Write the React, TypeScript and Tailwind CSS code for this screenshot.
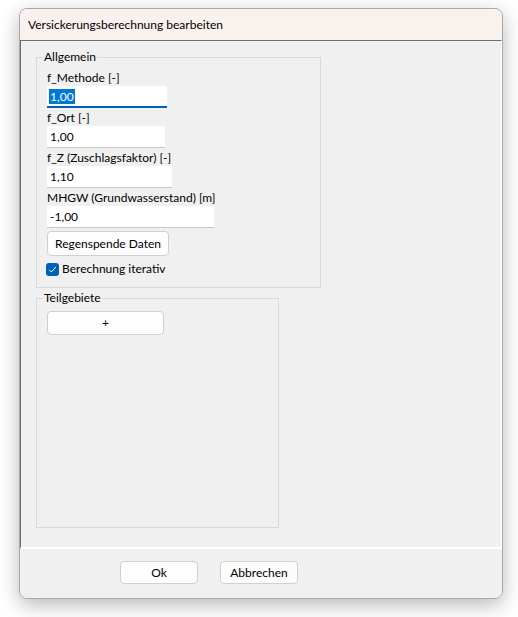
import { useState } from "react";

const font = { fontFamily: '"Segoe UI", Lato, sans-serif' };

interface FieldProps {
    label: string;
    value: string;
    width: string;
    focused?: boolean;
}

const Field = ({ label, value, width, focused }: FieldProps) => (
    <div className="flex flex-col">
        <label className="h-4 leading-4 text-[12px] text-black">{label}</label>
        <div
            className={`${width} h-[22px] bg-white flex items-center px-[2px] ${
                focused ? "border-b-2 border-[#005fb8]" : "border-b border-[#c8c8c8]"
            }`}
        >
            {focused ? (
                <span className="bg-[#0078d7] text-white text-[12px] leading-[15px] px-px">{value}</span>
            ) : (
                <span className="text-[12px] leading-[15px] px-px">{value}</span>
            )}
        </div>
    </div>
);

const Button = ({ children, className }: { children: React.ReactNode; className: string }) => (
    <button
        type="button"
        className={`${className} rounded-[4px] border border-[#d0d0d0] bg-[#fdfdfd] text-[12px] text-black leading-none flex items-center justify-center`}
    >
        {children}
    </button>
);

const App = () => {
    const [iterativ, setIterativ] = useState(true);

    return (
        <div className="w-[518px] h-[617px] bg-white pt-[8px] pl-[19px]" style={font}>
            <div className="w-[484px] h-[591px] flex flex-col rounded-[8px] border border-[#a8a8a8] bg-[#f0f0f0] shadow-[0_6px_20px_rgba(0,0,0,0.28)] overflow-hidden">
                {/* title bar */}
                <div className="h-[31px] shrink-0 bg-[#f9f1ed] flex items-center pl-[8px] text-[12px] text-black">
                    Versickerungsberechnung bearbeiten
                </div>

                {/* client area */}
                <div className="h-[509px] shrink-0 border-t border-l border-[#6e6e6e] border-r border-r-white border-b-2 border-b-white bg-[#f0f0f0] pl-[15px] pt-[8px]">
                    <fieldset className="w-[285px] border border-[#d9d9d9] pl-[10px] pb-[10px] pt-[5px]">
                        <legend className="-ml-[4px] px-px text-[12px] leading-4">Allgemein</legend>
                        <div className="flex flex-col gap-[2px]">
                            <Field label="f_Methode [-]" value="1,00" width="w-[120px]" focused />
                            <Field label="f_Ort [-]" value="1,00" width="w-[118px]" />
                            <Field label="f_Z (Zuschlagsfaktor) [-]" value="1,10" width="w-[125px]" />
                            <Field label="MHGW (Grundwasserstand) [m]" value="-1,00" width="w-[167px]" />
                        </div>
                        <Button className="mt-[3px] w-[122px] h-[25px]">Regenspende Daten</Button>
                        <label className="mt-[5px] -ml-px flex items-center gap-[3px] text-[12px] leading-4">
                            <span
                                onClick={() => setIterativ(!iterativ)}
                                className="w-[13px] h-[13px] rounded-[3px] bg-[#005fb8] flex items-center justify-center"
                            >
                                {iterativ && (
                                    <svg width="9" height="9" viewBox="0 0 9 9" fill="none">
                                        <path d="M1.2 4.8 L3.4 7 L7.8 2" stroke="white" strokeWidth="1" />
                                    </svg>
                                )}
                            </span>
                            Berechnung iterativ
                        </label>
                    </fieldset>

                    <fieldset className="mt-[2px] w-[243px] h-[238px] border border-[#d9d9d9] pl-[10px] pt-[5px]">
                        <legend className="-ml-[4px] px-px text-[12px] leading-4">Teilgebiete</legend>
                        <Button className="w-[117px] h-[24px]">+</Button>
                    </fieldset>
                </div>

                {/* footer */}
                <div className="flex-1 bg-[#f0f0f0] flex gap-[22px] pl-[100px] pt-[12px]">
                    <Button className="w-[78px] h-[23px]">Ok</Button>
                    <Button className="w-[78px] h-[23px]">Abbrechen</Button>
                </div>
            </div>
        </div>
    );
};

export default App;
